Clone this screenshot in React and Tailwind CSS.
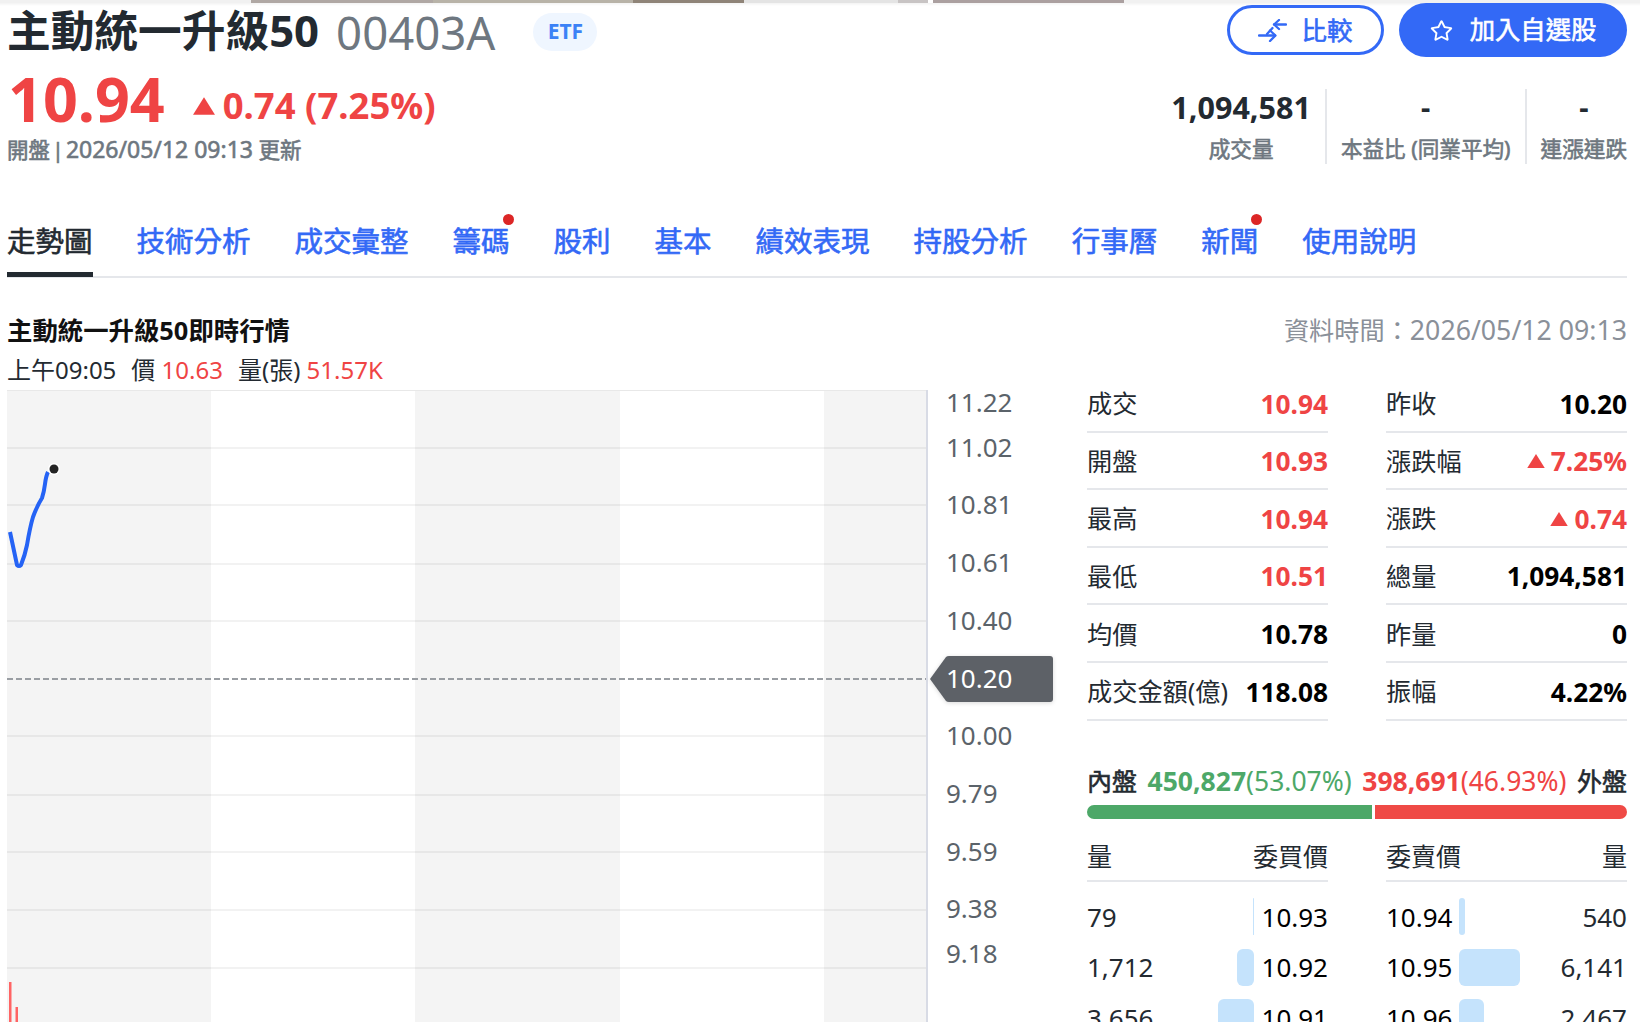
import React from "react";
import { FaRegStar } from "react-icons/fa";

const font = { fontFamily: '"Noto Sans", "Noto Sans CJK TC", sans-serif' };
// the reference's medium weight; installed CJK font only has regular and bold
const medium = "[-webkit-text-stroke:0.6px]";

const TABS = [
  { name: "技術分析" },
  { name: "成交彙整" },
  { name: "籌碼", dot: true },
  { name: "股利" },
  { name: "基本" },
  { name: "績效表現" },
  { name: "持股分析" },
  { name: "行事曆" },
  { name: "新聞", dot: true },
  { name: "使用說明" },
];

const STATS_LEFT = [
  ["成交", "10.94", true],
  ["開盤", "10.93", true],
  ["最高", "10.94", true],
  ["最低", "10.51", true],
  ["均價", "10.78", false],
  ["成交金額(億)", "118.08", false],
];

const STATS_RIGHT = [
  ["昨收", "10.20", false],
  ["漲跌幅", "7.25%", true],
  ["漲跌", "0.74", true],
  ["總量", "1,094,581", false],
  ["昨量", "0", false],
  ["振幅", "4.22%", false],
];

const BIDS = [
  { qty: "79", price: "10.93", w: 1 },
  { qty: "1,712", price: "10.92", w: 17 },
  { qty: "3,656", price: "10.91", w: 36 },
];

const ASKS = [
  { qty: "540", price: "10.94", w: 6 },
  { qty: "6,141", price: "10.95", w: 61 },
  { qty: "2,467", price: "10.96", w: 25 },
];

const GRID_Y = [448, 505, 564, 621, 736, 795, 852, 910, 968];
const AXIS = [
  ["11.22", 403],
  ["11.02", 448],
  ["10.81", 505],
  ["10.61", 563],
  ["10.40", 621],
  ["10.00", 736],
  ["9.79", 794],
  ["9.59", 852],
  ["9.38", 909],
  ["9.18", 954],
];

function Triangle({ className }) {
  return (
    <svg viewBox="0 0 20 16" className={className}>
      <path d="M10 0 L20 16 L0 16 Z" fill="#ef4444" />
    </svg>
  );
}

function CompareIcon() {
  return (
    <svg viewBox="0 0 29 23" className="w-[29px] h-[23px]" fill="none" stroke="#3369f6" strokeWidth="2.3" strokeLinecap="round" strokeLinejoin="round">
      <path d="M28 5.5 H16" />
      <path d="M21 1 L16 5.5 L21 10" />
      <path d="M14.5 9 L9 15" />
      <path d="M1 16.5 H17" />
      <path d="M12 11.5 L17.5 16.5 L12 22" />
    </svg>
  );
}

function Chart() {
  return (
    <svg viewBox="0 -12 1060 652" className="w-[1060px] h-[652px] -mt-[12px] shrink-0 block">
      <rect x="7" y="0" width="204" height="640" fill="#f4f4f4" />
      <rect x="415" y="0" width="205" height="640" fill="#f4f4f4" />
      <rect x="824" y="0" width="103" height="640" fill="#f4f4f4" />
      <line x1="7" x2="927" y1="0.5" y2="0.5" stroke="#e8e8e8" />
      {GRID_Y.map((y) => (
        <line key={y} x1="7" x2="927" y1={y - 390} y2={y - 390} stroke="#000" strokeOpacity="0.05" strokeWidth="2" />
      ))}
      <line x1="7" x2="927" y1="289" y2="289" stroke="#9a9ea3" strokeWidth="2" strokeDasharray="6 3" />
      <line x1="927" x2="927" y1="0" y2="640" stroke="#d8dbe5" strokeWidth="2" />
      <path
        d="M10 142 L17 175 Q19 177 21 175 Q25 165 27 155 Q30 137 33 127 Q37 116 42 108 Q44 102 45 94 Q46 86 48 82"
        fill="none"
        stroke="#2563f5"
        strokeWidth="4"
        strokeLinejoin="round"
      />
      <circle cx="54" cy="79" r="6" fill="#fff" />
      <circle cx="54" cy="79" r="4.5" fill="#232323" />
      <rect x="9" y="592" width="2.5" height="48" fill="#ff6464" />
      <rect x="15.5" y="617" width="2.5" height="23" fill="#ff6464" />
      <g style={font} fontSize="26" fill="#5b636a">
        {AXIS.map(([t, y]) => (
          <text key={t} x="946" y={y - 390 + 9}>{t}</text>
        ))}
      </g>
      <path
        className="drop-shadow-sm"
        d="M930 289 L946 267 Q947 266 949 266 H1050 Q1053 266 1053 269 V309 Q1053 312 1050 312 H949 Q947 312 946 311 Z"
        fill="#5d6167"
      />
      <text x="946" y="298" style={font} fontSize="26" fill="#fff">10.20</text>
    </svg>
  );
}

function Stat({ label, value, red, up }) {
  return (
    <div className="flex justify-between items-center h-[57.6px] pt-[2px] border-b-2 border-[#e5e7eb] text-[25.2px] leading-none">
      <span className="text-[#232a31]">{label}</span>
      <span className={`flex items-center gap-[6px] text-[26.3px] font-bold ${red ? "text-[#ef4444]" : "text-black"}`}>
        {up && <Triangle className="w-[18px] h-[14px]" />}
        {value}
      </span>
    </div>
  );
}

function BookRow({ qty, price, w, side }) {
  const bar = (
    <div className="bg-[#c5e3fc] h-[37px] rounded-md" style={{ width: w }} />
  );
  if (side === "bid") {
    return (
      <div className="flex items-center h-[50.5px] text-[26px] leading-none">
        <span className="text-[#232a31]">{qty}</span>
        <div className="ml-auto flex items-center gap-[8px]">
          {bar}
          <span className="text-black">{price}</span>
        </div>
      </div>
    );
  }
  return (
    <div className="flex items-center h-[50.5px] text-[26px] leading-none">
      <div className="flex items-center gap-[7px]">
        <span className="text-black">{price}</span>
        {bar}
      </div>
      <span className="ml-auto text-[#232a31]">{qty}</span>
    </div>
  );
}

export default function App() {
  return (
    <div style={font} className="w-[1640px] h-[1022px] overflow-hidden bg-white relative">
      {/* top strip of the page above, cut off by the screenshot */}
      <div className="h-[3px] flex bg-[#f1f1f1]">
        <div className="ml-[251px] w-[182px] bg-[#b0a8a4]" />
        <div className="w-[200px] bg-[#b8b3a8]" />
        <div className="w-[111px] bg-[#8f8478]" />
        <div className="w-[154px] bg-[#e4e4e4]" />
        <div className="w-[30px] bg-[#c8c4c4]" />
        <div className="w-[5px] bg-white" />
        <div className="w-[191px] bg-[#aba0a0]" />
      </div>
      <div className="h-[3px] bg-gradient-to-b from-[#f3f3f3] to-white" />

      <div className="pl-[7px] pr-[13px] -mt-[3px]">
        {/* title row */}
        <div className="flex justify-between items-start h-[55px]">
          <div className="flex items-center h-[60px] -mt-[2px]">
            <h1 className="text-[43.7px] leading-none font-bold text-[#232a31]">主動統一升級50</h1>
            <span className="ml-[17px] mt-[2px] text-[45.5px] leading-tight text-[#6e7780]">00403A</span>
            <span className="ml-[38px] mt-[1px] w-[64px] h-[38px] rounded-full bg-[#eff6ff] text-[#3b82f6] text-[21px] font-bold flex items-center justify-center">ETF</span>
          </div>
          <div className="flex items-center gap-[15px]">
            <button className={`w-[157px] h-[50px] rounded-full border-[3px] border-[#3369f6] text-[#3369f6] text-[25.5px] ${medium} flex items-center justify-center gap-[14px] bg-white`}>
              <CompareIcon />
              比較
            </button>
            <button className={`w-[228px] h-[54px] rounded-full bg-[#3369f6] text-white text-[25.3px] ${medium} flex items-center justify-center gap-[17px]`}>
              <FaRegStar className="text-[23px]" />
              加入自選股
            </button>
          </div>
        </div>

        {/* price row */}
        <div className="flex justify-between mt-[9px] h-[102px]">
          <div>
            <div className="flex items-center h-[62px]">
              <span className="text-[61px] leading-none font-bold text-[#ef4444] ml-[1px]">10.94</span>
              <Triangle className="ml-[28px] w-[22px] h-[18px] mt-[15px]" />
              <span className="ml-[8px] text-[36.5px] leading-none font-bold text-[#ef4444] mt-[15px]">0.74 (7.25%)</span>
            </div>
            <div className={`mt-[9px] text-[21.5px] leading-none ${medium} text-[#6e7780]`}>
              開盤<span className="mx-[2px]">|</span><span className="text-[23px]">2026/05/12 09:13</span> 更新
            </div>
          </div>
          <div className="flex h-[75px] mt-[22px]">
            <div className="pr-[14px] text-center flex flex-col justify-between">
              <div className="text-[30.5px] leading-[36px] font-bold text-[#232a31]">1,094,581</div>
              <div className={`text-[21.6px] leading-[30px] ${medium} text-[#6e7780]`}>成交量</div>
            </div>
            <div className="border-l-2 border-[#e5e7eb] px-[14px] text-center flex flex-col justify-between">
              <div className="text-[29px] leading-[36px] font-bold text-[#232a31]">-</div>
              <div className={`text-[21.6px] leading-[30px] ${medium} text-[#6e7780]`}>本益比 (同業平均)</div>
            </div>
            <div className="border-l-2 border-[#e5e7eb] pl-[14px] text-center flex flex-col justify-between">
              <div className="text-[29px] leading-[36px] font-bold text-[#232a31]">-</div>
              <div className={`text-[21.6px] leading-[30px] ${medium} text-[#6e7780]`}>連漲連跌</div>
            </div>
          </div>
        </div>

        {/* tabs */}
        <div className="flex gap-[44px] h-[59px] mt-[50px] border-b-2 border-[#e5e7eb]">
          <div className={`h-[58px] border-b-[5px] border-[#232a31] text-[#232a31] text-[28.5px] leading-[44px] ${medium}`}>走勢圖</div>
          {TABS.map((tab) => (
            <div key={tab.name} className={`relative text-[#3369f6] text-[28.5px] leading-[44px] ${medium}`}>
              {tab.name}
              {tab.dot && <span className="absolute right-[-4px] -top-[5px] w-[11px] h-[11px] rounded-full bg-[#dc2626]" />}
            </div>
          ))}
        </div>

        {/* section title */}
        <div className="flex justify-between items-center mt-[32px] h-[40px]">
          <h2 className="text-[25.4px] font-bold text-[#111]">主動統一升級50即時行情</h2>
          <span className="text-[25.2px] text-[#8a9099]">資料時間：<span className="text-[26.7px]">2026/05/12 09:13</span></span>
        </div>
        <div className="text-[24px] leading-[40px] text-[#232a31]">
          上午09:05<span className="ml-[15px]">價</span> <span className="text-[#ef4444]">10.63</span>
          <span className="ml-[15px]">量(張)</span> <span className="text-[#ef4444]">51.57K</span>
        </div>
      </div>

      {/* chart + quotes */}
      <div className="flex">
        <Chart />
        <div className="ml-[27px] w-[540px] shrink-0 -mt-[15px]">
          <div className="grid grid-cols-2 gap-x-[58px]">
            <div>
              {STATS_LEFT.map(([l, v, r]) => <Stat key={l} label={l} value={v} red={r} />)}
            </div>
            <div>
              {STATS_RIGHT.map(([l, v, r]) => <Stat key={l} label={l} value={v} red={r} up={l.startsWith("漲")} />)}
            </div>
          </div>

          <div className="mt-[42px] flex justify-between text-[26.5px] leading-[36px]">
            <span className={`${medium} text-[25px] text-[#232a31]`}>內盤</span>
            <span className="text-[#4da868]"><b>450,827</b>(53.07%)</span>
            <span className="text-[#ef4444]"><b>398,691</b>(46.93%)</span>
            <span className={`${medium} text-[25px] text-[#232a31]`}>外盤</span>
          </div>
          <div className="flex gap-[3px] h-[14px] mt-[6px]">
            <div className="w-[285px] bg-[#4da868] rounded-l-full" />
            <div className="flex-1 bg-[#ef4a46] rounded-r-full" />
          </div>

          <div className="grid grid-cols-2 gap-x-[58px] mt-[18px]">
            <div>
              <div className="flex justify-between h-[45px] border-b-2 border-[#e5e7eb] text-[25px] text-[#232a31] leading-[38px] mb-[10px]">
                <span>量</span><span>委買價</span>
              </div>
              {BIDS.map((b) => <BookRow key={b.price} {...b} side="bid" />)}
            </div>
            <div>
              <div className="flex justify-between h-[45px] border-b-2 border-[#e5e7eb] text-[25px] text-[#232a31] leading-[38px] mb-[10px]">
                <span>委賣價</span><span>量</span>
              </div>
              {ASKS.map((a) => <BookRow key={a.price} {...a} side="ask" />)}
            </div>
          </div>
        </div>
      </div>
    </div>
  );
}
